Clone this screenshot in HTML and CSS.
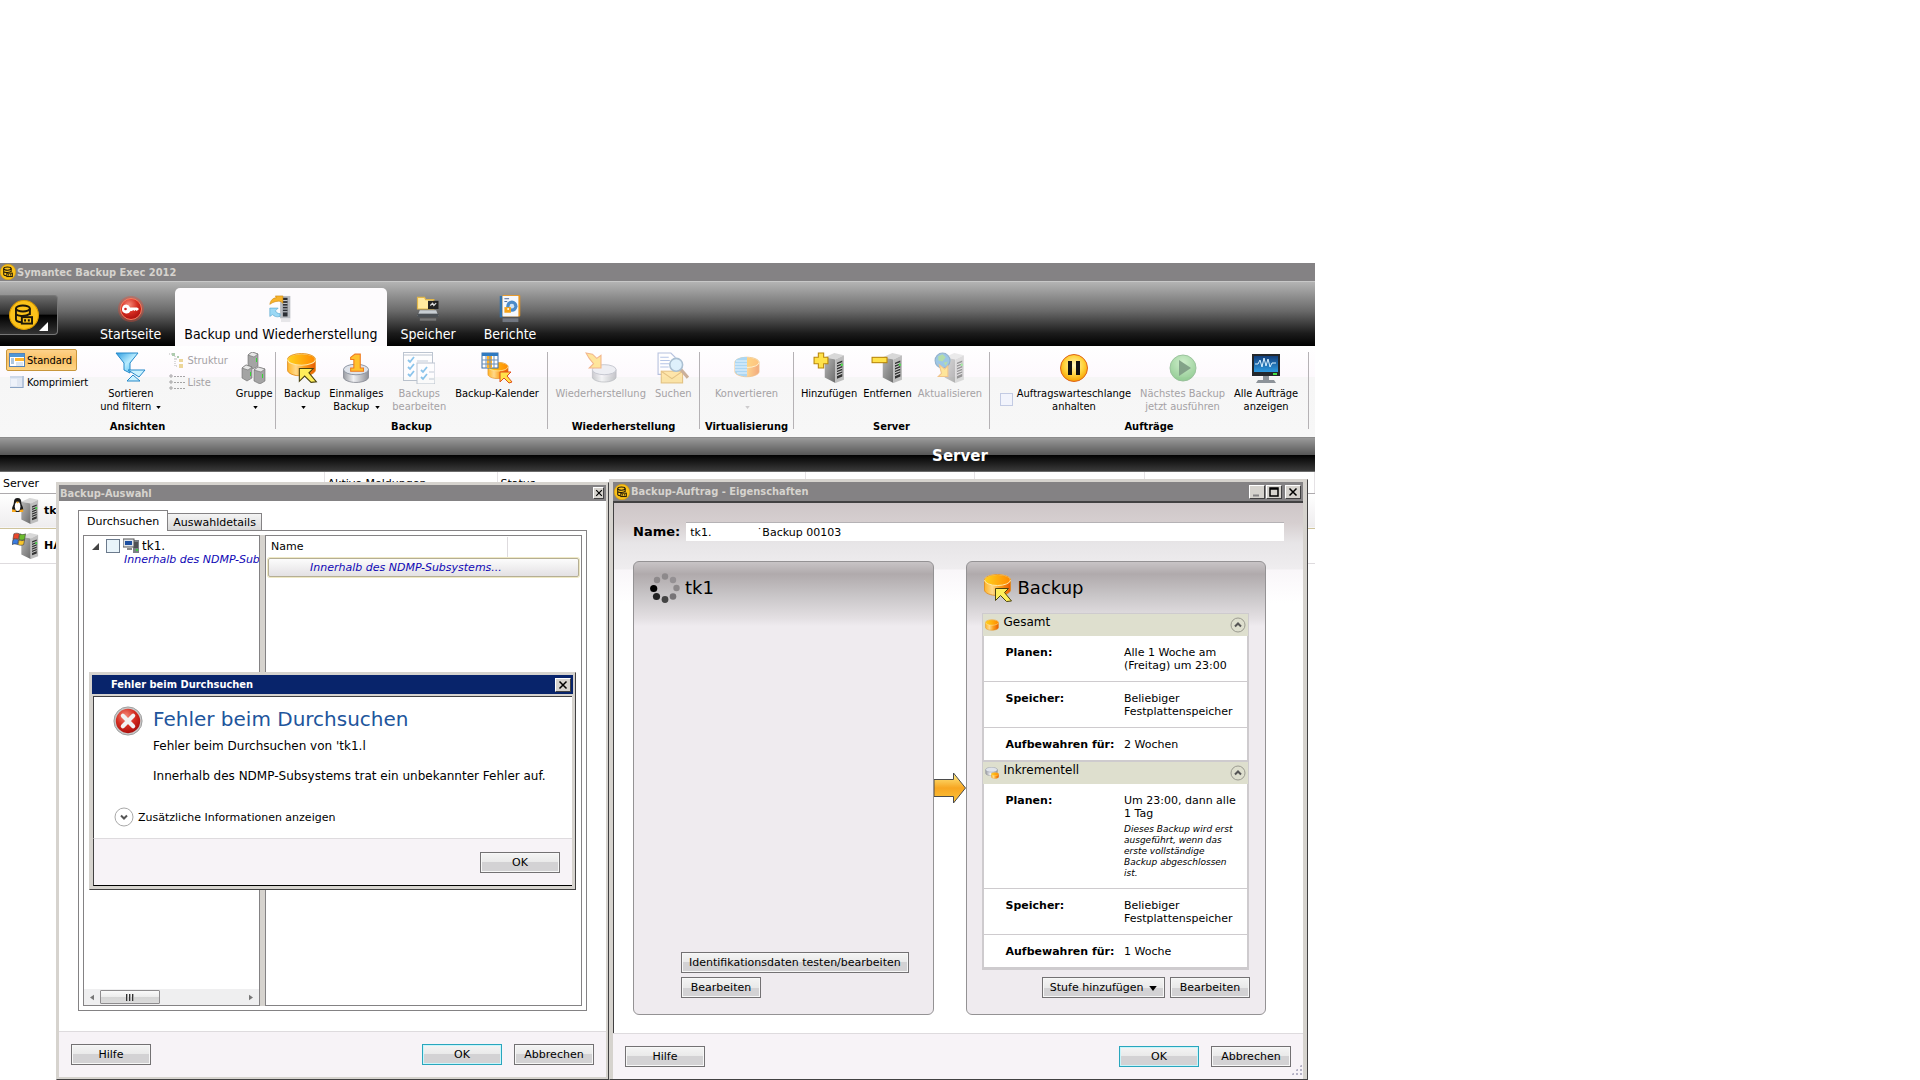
FILE: index.html
```html
<!DOCTYPE html>
<html lang="de">
<head>
    <meta charset="UTF-8">
    <meta name="viewport" content="width=device-width, initial-scale=1.0">
    <title>Symantec Backup Exec 2012</title>
    <link rel="stylesheet" href="styles.css">
</head>
<body>

    <!-- Icon definitions -->
    <svg class="defs" width="0" height="0" aria-hidden="true">
        <defs>
            <linearGradient id="gold" x1="0" y1="0" x2="1" y2="0">
                <stop offset="0" stop-color="#ffb52a"/>
                <stop offset="0.3" stop-color="#ffd98a"/>
                <stop offset="0.6" stop-color="#fba01c"/>
                <stop offset="1" stop-color="#ea5a00"/>
            </linearGradient>
            <linearGradient id="goldTop" x1="0" y1="0" x2="1" y2="0">
                <stop offset="0" stop-color="#ffd21e"/>
                <stop offset="1" stop-color="#ff8a00"/>
            </linearGradient>
            <linearGradient id="goldV" x1="0" y1="0" x2="0" y2="1">
                <stop offset="0" stop-color="#fff08a"/>
                <stop offset="0.5" stop-color="#f7a622"/>
                <stop offset="1" stop-color="#fbc63c"/>
            </linearGradient>
            <linearGradient id="metal" x1="0" y1="0" x2="1" y2="0">
                <stop offset="0" stop-color="#9a9ca2"/>
                <stop offset="0.4" stop-color="#f0f1f4"/>
                <stop offset="1" stop-color="#8e9097"/>
            </linearGradient>
            <linearGradient id="side" x1="0" y1="0" x2="1" y2="1">
                <stop offset="0" stop-color="#b5b5b5"/>
                <stop offset="1" stop-color="#6c6c6c"/>
            </linearGradient>
            <linearGradient id="blue" x1="0" y1="0" x2="1" y2="1">
                <stop offset="0" stop-color="#2a9be0"/>
                <stop offset="0.5" stop-color="#b8ecff"/>
                <stop offset="1" stop-color="#36b4ee"/>
            </linearGradient>
            <linearGradient id="screen" x1="0" y1="0" x2="0" y2="1">
                <stop offset="0" stop-color="#123f7c"/>
                <stop offset="1" stop-color="#2e9ae0"/>
            </linearGradient>
            <radialGradient id="red" cx="0.4" cy="0.3" r="0.8">
                <stop offset="0" stop-color="#f58a7a"/>
                <stop offset="0.5" stop-color="#d42c20"/>
                <stop offset="1" stop-color="#a00808"/>
            </radialGradient>
            <radialGradient id="amber" cx="0.5" cy="0.4" r="0.6">
                <stop offset="0" stop-color="#fff6c0"/>
                <stop offset="0.6" stop-color="#ffd23a"/>
                <stop offset="1" stop-color="#f5a000"/>
            </radialGradient>
            <radialGradient id="green" cx="0.5" cy="0.3" r="0.8">
                <stop offset="0" stop-color="#a0e09a"/>
                <stop offset="1" stop-color="#1f9a22"/>
            </radialGradient>
        </defs>

        <symbol id="i-exec" viewBox="0 0 28 28">
            <circle cx="14" cy="14" r="13.500" fill="#fbc21a" stroke="#d99a00"/>
            <g fill="none" stroke="#1c1608" stroke-width="1.800">
                <ellipse cx="13" cy="8" rx="6.500" ry="2.800"/>
                <path d="M6.500 8v10c0 1.500 2 2.500 5 2.800M19.500 8v6M6.500 13c1 2 8 3 13 0"/>
                <rect x="12" y="16" width="9.500" height="6"/>
                <path d="M15 18v2M18.500 18v2"/>
            </g>
        </symbol>

        <symbol id="i-key" viewBox="0 0 28 28">
            <circle cx="14" cy="14" r="13" fill="#f2452e" opacity="0.35"/>
            <circle cx="14" cy="14" r="10.500" fill="url(#red)" stroke="#ff7a5c"/>
            <path d="M9.500 9.500a4.500 4.500 0 1 0 4 6.500h1.500l1.200-1 1.200 1 1.200-1 1.200 1 2.200-2-1.900-1.500h-7A4.500 4.500 0 0 0 9.500 9.500z" fill="#fff"/>
            <circle cx="8.500" cy="14" r="1.300" fill="#c22"/>
        </symbol>

        <symbol id="i-server" viewBox="0 0 20 28">
            <path d="M1 4l9-4 9 2-8 4z" fill="#d8d8d8"/>
            <path d="M1 4l10 2v22L1 23z" fill="url(#side)"/>
            <path d="M11 6l8-4v23l-8 3z" fill="#bdbdbd"/>
            <path d="M12.500 9l5-2v15l-5 2z" fill="#333"/>
            <path d="M12.500 11l5-2M12.500 13.500l5-2M12.500 16l5-2M12.500 18.500l5-2M12.500 21l5-2" stroke="#d0d0d0"/>
            <rect x="16" y="10" width="2" height="2" fill="#4be04b"/>
        </symbol>

        <symbol id="i-transfer" viewBox="0 0 26 30">
            <rect x="12" y="1" width="11" height="24" fill="#b9bcc2"/>
            <rect x="15" y="3" width="5" height="20" fill="#2c2f35"/>
            <path d="M15 6h5M15 9h5M15 12h5M15 15h5M15 18h5" stroke="#dfe3ea"/>
            <rect x="13" y="25" width="10" height="4" fill="#d9d9dc" opacity="0.6"/>
            <path d="M1 10c1-5 4-7 7-7l-1-2h8v8l-2-2c-3-1-8 0-12 3z" fill="#f7b32b" stroke="#c98208" stroke-width="0.600"/>
            <path d="M12 23c-4 1-6 0-8-2l-3 2v-9h9l-3 3c1 2 3 3 5 3z" fill="#9bd8f5" stroke="#4a9cc8" stroke-width="0.600"/>
        </symbol>

        <symbol id="i-storage" viewBox="0 0 20 24">
            <path d="M1 2h6l1 2h7v8H1z" fill="#ffe9a0" stroke="#e2b74a"/>
            <rect x="10" y="5" width="9" height="7" fill="#222"/>
            <path d="M12 9l2-2 1 2 2-2" stroke="#ddd" fill="none"/>
            <path d="M3 13h14l2 5H1z" fill="#c8ced3"/>
            <rect x="1" y="16" width="18" height="3" fill="#4b5055"/>
            <path d="M3 21h14" stroke="#777" stroke-width="2"/>
        </symbol>

        <symbol id="i-report" viewBox="0 0 24 30">
            <rect x="1" y="1" width="3" height="23" fill="#3273ac"/>
            <rect x="4" y="0" width="19" height="23" rx="1" fill="#e59422"/>
            <rect x="4" y="1" width="17" height="22" fill="#f5f8fd"/>
            <path d="M6 4h5M6 7h3" stroke="#445f93"/>
            <circle cx="14" cy="12" r="6" fill="#4b8ac8"/>
            <circle cx="14" cy="12" r="2.500" fill="#cfe3f5"/>
            <path d="M6 13h7v6H6z" fill="#f6a317"/>
            <circle cx="10" cy="15" r="1" fill="#fff"/>
            <path d="M4 25h17v4H4z" fill="#8f98a8" opacity="0.6"/>
        </symbol>

        <symbol id="i-standard" viewBox="0 0 16 14">
            <rect x="0.500" y="0.500" width="15" height="13" fill="#fff" stroke="#5483b8"/>
            <rect x="1" y="1" width="14" height="3" fill="#4f96d4"/>
            <path d="M2 6h3M2 8h3M2 10h3" stroke="#5b8dc0"/>
            <rect x="6" y="5" width="9" height="3" fill="#ffb62e"/>
            <path d="M7 10h7M7 12h7" stroke="#b9cde2"/>
        </symbol>

        <symbol id="i-compact" viewBox="0 0 16 14">
            <rect x="1" y="1" width="14" height="12" fill="#dfe6f2"/>
            <path d="M1 2h12" stroke="#b9c8de"/>
            <path d="M14 1v12M1 12.500h13" stroke="#8aa3c4"/>
            <path d="M2 4h6v7H2z" fill="#eef2fa"/>
        </symbol>

        <symbol id="i-filter" viewBox="0 0 32 32">
            <path d="M1 1h22l-8 10v10l-6-3v-7z" fill="url(#blue)" stroke="#2689c9"/>
            <path d="M13 18h17l-6 7z" fill="#c9f2ff" stroke="#2689c9"/>
            <path d="M12 29l6-6 7 6z" fill="#c9f2ff" stroke="#2689c9"/>
        </symbol>

        <symbol id="i-tree" viewBox="0 0 16 16">
            <path d="M3 1h3v3H3zM8 4h2v2H8z" fill="#5f9a5f"/>
            <path d="M0 2h3M6 4v3h2M6 7v7h3" fill="none" stroke="#777" stroke-dasharray="1 1"/>
            <path d="M10 7h4v3h-4zM10 12h4v4h-4z" fill="#dcb338"/>
        </symbol>

        <symbol id="i-list" viewBox="0 0 16 16">
            <path d="M1 1h2v2H1zM1 7h2v2H1zM1 13h2v2H1z" fill="none" stroke="#555"/>
            <path d="M5 2.500h11M5 8.500h11M5 14.500h11" stroke="#555" stroke-dasharray="2 1"/>
        </symbol>

        <symbol id="i-group" viewBox="0 0 26 32">
            <g stroke="#6f6f6f" stroke-width="0.600">
                <path d="M7 3l4-3 6 2v12l-5 3-5-3z" fill="#a4a4a4"/><path d="M7 3l4-3 6 2-4 3z" fill="#e6e6e6"/>
                <path d="M1 16l4-3 6 2v11l-5 3-5-3z" fill="#a4a4a4"/><path d="M1 16l4-3 6 2-4 3z" fill="#e6e6e6"/>
                <path d="M13 18l4-3 7 2v12l-5 3-6-3z" fill="#a4a4a4"/><path d="M13 18l4-3 7 2-4 3z" fill="#e6e6e6"/>
            </g>
            <path d="M15 6h1v4h-1zM9 20h1v4H9zM21 22h1v4h-1z" fill="#36d636"/>
        </symbol>

        <symbol id="i-disk" viewBox="0 0 28 22">
            <path d="M1 6v10c0 3 6 5.500 13 5.500S27 19 27 16V6z" fill="url(#gold)" stroke="#e08a1a" stroke-width="0.800"/>
            <ellipse cx="14" cy="6" rx="13" ry="5.500" fill="url(#goldTop)" stroke="#ffe9a8"/>
            <path d="M1 6c0-3 6-5.500 13-5.500S27 3 27 6" fill="none" stroke="#e08a1a" stroke-width="0.800"/>
        </symbol>

        <symbol id="i-drum" viewBox="0 0 28 20">
            <path d="M1 6v8c0 3 6 5.500 13 5.500S27 17 27 14V6z" fill="url(#metal)" stroke="#7d828c" stroke-width="0.800"/>
            <ellipse cx="14" cy="6" rx="13" ry="5.500" fill="#dfe3ea" stroke="#8b92a0"/>
        </symbol>

        <symbol id="i-backup" viewBox="0 0 30 30">
            <use href="#i-disk" x="0" y="1" width="29" height="22"/>
            <path d="M12.500 15.500h13l-4 4 7 8.500-5 .5-6-6-5 5z" fill="#ffee5a" stroke="#4a4210"/>
        </symbol>

        <symbol id="i-once" viewBox="0 0 30 30">
            <use href="#i-drum" x="2" y="11" width="26" height="18"/>
            <path d="M10 5l4-3h5v13h3v3H10v-3h3V7h-3z" fill="#ffc22e" stroke="#ef7a1c"/>
        </symbol>

        <symbol id="i-checks" viewBox="0 0 32 32">
            <rect x="0.500" y="0.500" width="29" height="28" fill="#fff" stroke="#7d8ea4"/>
            <path d="M1 3h29" stroke="#7d8ea4"/>
            <rect x="14" y="11" width="18" height="21" fill="#fff" stroke="#7d8ea4"/>
            <path d="M5 8l2 2 4-5M5 15l2 2 4-5M5 22l2 2 4-5M18 18l2 2 4-5M18 25l2 2 4-5" fill="none" stroke="#1b8fdb" stroke-width="1.800"/>
            <path d="M14 9h11M26 20h5M26 27h5" stroke="#8a9cb3"/>
        </symbol>

        <symbol id="i-calendar" viewBox="0 0 32 32">
            <use href="#i-disk" x="6" y="10" width="22" height="17"/>
            <rect x="1" y="1" width="16" height="15" fill="#fff" stroke="#3a6ea8"/>
            <rect x="1" y="1" width="16" height="3" fill="#2f7ac0"/>
            <rect x="6" y="4" width="5" height="12" fill="#ffb12a"/>
            <path d="M1 8h16M1 12h16M5 4v12M9 4v12M13 4v12" stroke="#6b8fb8"/>
            <path d="M19 20h11l-4 4 5 6-3 1-5-5-4 4z" fill="#ffe14a" stroke="#e0501c"/>
        </symbol>

        <symbol id="i-restore" viewBox="0 0 30 30">
            <use href="#i-drum" x="6" y="11" width="24" height="18"/>
            <path d="M1 1l6 1 4 4 4-3v12H4l4-4-4-5z" fill="#ffcf3a" stroke="#e8721c"/>
        </symbol>

        <symbol id="i-search" viewBox="0 0 30 30">
            <path d="M1 1h12l4 4v16H1z" fill="#fff" stroke="#7088c0"/>
            <path d="M3 5h8M3 8h9M3 11h9M3 14h8" stroke="#6f8fd0"/>
            <rect x="4" y="18" width="20" height="11" fill="#ffd25a" stroke="#cf8d10"/>
            <path d="M4 18l10 7 10-7" fill="none" stroke="#cf8d10"/>
            <path d="M22 16l7 8" stroke="#9a6a3a" stroke-width="3"/>
            <circle cx="18" cy="12" r="6" fill="#bfe6fb" stroke="#5b86a8" stroke-width="1.500"/>
        </symbol>

        <symbol id="i-convert" viewBox="0 0 32 26">
            <use href="#i-disk" x="3" y="1" width="26" height="22"/>
            <path d="M16 2C9 2 4 4 4 7v9c0 3 5 5.500 12 5.500z" fill="#5cb4ea"/>
            <path d="M5 6h11M4 9h12M4 12h12M4 15h12M6 18h10" stroke="#d8f1ff"/>
        </symbol>

        <symbol id="i-add" viewBox="0 0 30 30">
            <use href="#i-server" x="10" y="1" width="20" height="28"/>
            <path d="M5 1h5v4h4v6h-4v4H5v-4H1V5h4z" fill="#ffe24a" stroke="#b98608"/>
        </symbol>

        <symbol id="i-remove" viewBox="0 0 30 30">
            <use href="#i-server" x="10" y="1" width="20" height="28"/>
            <rect x="1" y="5" width="14" height="5" fill="#ffe24a" stroke="#b98608"/>
        </symbol>

        <symbol id="i-refresh" viewBox="0 0 30 30">
            <use href="#i-server" x="9" y="1" width="20" height="28"/>
            <circle cx="8" cy="8" r="7" fill="#3f93cf" stroke="#2a6a9a"/>
            <path d="M4 4l4-2 3 3-3 4-4-1zM9 10l4-1-2 4z" fill="#6cbf5a"/>
            <path d="M5 12l5 4 3-3v10H4l3-3z" fill="#ffd23a" stroke="#e8921c"/>
        </symbol>

        <symbol id="i-pause" viewBox="0 0 32 32">
            <circle cx="16" cy="15" r="13.500" fill="url(#amber)" stroke="#e0641a"/>
            <rect x="10" y="8" width="4" height="14" fill="#111"/>
            <rect x="18" y="8" width="4" height="14" fill="#111"/>
        </symbol>

        <symbol id="i-play" viewBox="0 0 32 32">
            <circle cx="16" cy="16" r="13" fill="url(#green)" stroke="#3c8c40"/>
            <path d="M12 8l12 8-12 8z" fill="#0b4d16"/>
        </symbol>

        <symbol id="i-monitor" viewBox="0 0 32 32">
            <rect x="2" y="2" width="28" height="22" fill="#24282c"/>
            <rect x="4" y="4" width="24" height="16" fill="url(#screen)"/>
            <path d="M5 12h3l2-4 2 7 2-9 2 8 2-7 2 8 2-4h4" fill="none" stroke="#d9f1ff"/>
            <rect x="23" y="21" width="4" height="2" fill="#44e044"/>
            <path d="M13 24h6v4h5l2 3H6l2-3h5z" fill="#8d9399"/>
        </symbol>

        <symbol id="i-linux" viewBox="0 0 30 30">
            <use href="#i-server" x="9" y="1" width="20" height="28"/>
            <path d="M6 1c3 0 4 2 4 5s2 4 2 7-3 3-6 3-6 0-6-3 2-4 2-7 1-5 4-5z" fill="#1a1a1a"/>
            <ellipse cx="6" cy="10" rx="3" ry="5" fill="#fff"/>
            <path d="M4 5h4l-2 2z" fill="#f7a81c"/>
            <path d="M0 13l4 1v2H0zM12 13l-4 1v2h4z" fill="#f7a81c"/>
        </symbol>

        <symbol id="i-windows" viewBox="0 0 30 30">
            <use href="#i-server" x="9" y="1" width="20" height="28"/>
            <g stroke="#333" stroke-width="0.600">
                <path d="M2 2c2-1 4-1 6 0l-1 6c-2-1-4-1-6 0z" fill="#e8482c"/>
                <path d="M8.500 2c2 1 4 1 6 0l-1 6c-2 1-4 1-6 0z" fill="#6cbc2c"/>
                <path d="M1 8.500c2-1 4-1 6 0l-1 5c-2-1-4-1-6 0z" fill="#3a7ce0"/>
                <path d="M7.500 8.500c2 1 4 1 6 0l-1 5c-2 1-4 1-6 0z" fill="#f7c52c"/>
            </g>
        </symbol>

        <symbol id="i-computer" viewBox="0 0 16 16">
            <rect x="10" y="2" width="6" height="13" fill="#7c8186"/>
            <path d="M11 5h4M11 7h4M11 9h4" stroke="#222"/>
            <rect x="13" y="11" width="2" height="2" fill="#3fd03f"/>
            <rect x="0" y="1" width="11" height="8" fill="#dfe3e8" stroke="#555"/>
            <rect x="2" y="3" width="7" height="4" fill="#1d4fa0"/>
            <path d="M4 10h5v2H4z" fill="#888"/>
        </symbol>

        <symbol id="i-spinner" viewBox="0 0 30 30">
            <circle cx="15" cy="3.500" r="3.200" fill="#8d898b"/>
            <circle cx="23" cy="7" r="3.200" fill="#949093"/>
            <circle cx="26.500" cy="15" r="3.200" fill="#8d898b"/>
            <circle cx="23" cy="23.500" r="3.300" fill="#777477"/>
            <circle cx="15" cy="26.500" r="3.400" fill="#444"/>
            <circle cx="6.500" cy="23.500" r="3.600" fill="#222"/>
            <circle cx="3.700" cy="15.500" r="3.600" fill="#000"/>
            <circle cx="7" cy="7" r="3.200" fill="#8d898b"/>
        </symbol>

        <symbol id="i-arrow" viewBox="0 0 32 32">
            <path d="M0 7.500h19.500V1L31.500 16 19.500 31v-6.500H0z" fill="url(#goldV)" stroke="#4b4b4b"/>
        </symbol>

        <symbol id="i-error" viewBox="0 0 32 32">
            <circle cx="16" cy="16" r="15" fill="#c9c9c9" stroke="#9a9a9a"/>
            <circle cx="16" cy="16" r="13" fill="url(#red)"/>
            <path d="M10.500 10.500l11 11M21.500 10.500l-11 11" stroke="#f2f2f2" stroke-width="4.500" stroke-linecap="round"/>
        </symbol>

        <symbol id="i-chevron-up" viewBox="0 0 16 16">
            <circle cx="8" cy="8" r="7" fill="none" stroke="#9b9b90"/>
            <path d="M5 9.500l3-3 3 3" fill="none" stroke="#555" stroke-width="2"/>
        </symbol>

        <symbol id="i-chevron-down" viewBox="0 0 20 20">
            <circle cx="10" cy="10" r="9" fill="#fff" stroke="#a9a9a9"/>
            <path d="M7 8.500l3 3 3-3" fill="none" stroke="#555" stroke-width="2"/>
        </symbol>

        <symbol id="i-increment" viewBox="0 0 14 12">
            <use href="#i-drum" x="0" y="0" width="13" height="9"/>
            <use href="#i-disk" x="6" y="5" width="8" height="7"/>
        </symbol>

        <symbol id="i-caret" viewBox="0 0 6 4"><path d="M0 0h6L3 4z" fill="currentColor"/></symbol>
        <symbol id="i-min" viewBox="0 0 10 10"><path d="M1 8.500h6" stroke="#848284" stroke-width="2"/></symbol>
        <symbol id="i-max" viewBox="0 0 10 10"><path d="M1 1h8v8H1zM1 2h8" fill="none" stroke="#000" stroke-width="1.500"/></symbol>
        <symbol id="i-close" viewBox="0 0 10 10"><path d="M1.500 1.500l7 7M8.500 1.500l-7 7" stroke="#000" stroke-width="1.500"/></symbol>
    </svg>

    <div class="app">
        <header class="titlebar">
            <svg class="icon-16"><use href="#i-exec"/></svg>
            <h1>Symantec Backup Exec 2012</h1>
        </header>

        <nav class="tabs">
            <button class="orb" type="button" aria-label="Backup Exec">
                <svg class="orb-icon"><use href="#i-exec"/></svg>
                <svg class="orb-corner" viewBox="0 0 8 8"><path d="M8 0v8H0z" fill="#fff"/></svg>
            </button>
            <a class="tab" href="#start"><svg class="icon-28"><use href="#i-key"/></svg>Startseite</a>
            <a class="tab active" href="#backup"><svg class="icon-28"><use href="#i-transfer"/></svg>Backup und Wiederherstellung</a>
            <a class="tab" href="#storage"><svg class="icon-28"><use href="#i-storage"/></svg>Speicher</a>
            <a class="tab" href="#reports"><svg class="icon-28"><use href="#i-report"/></svg>Berichte</a>
        </nav>

        <div class="ribbon">
            <section class="group">
                <div class="tools views">
                    <div class="stack">
                        <button class="small selected" type="button"><svg class="icon-16"><use href="#i-standard"/></svg>Standard</button>
                        <button class="small" type="button"><svg class="icon-16"><use href="#i-compact"/></svg>Komprimiert</button>
                    </div>
                    <button class="tool" type="button"><svg class="icon-32"><use href="#i-filter"/></svg><span>Sortieren<br>und filtern <svg class="caret"><use href="#i-caret"/></svg></span></button>
                    <div class="stack">
                        <button class="small" type="button" disabled><svg class="icon-16"><use href="#i-tree"/></svg>Struktur</button>
                        <button class="small" type="button" disabled><svg class="icon-16"><use href="#i-list"/></svg>Liste</button>
                    </div>
                    <button class="tool" type="button"><svg class="icon-32"><use href="#i-group"/></svg><span>Gruppe<br><svg class="caret"><use href="#i-caret"/></svg></span></button>
                </div>
                <h2>Ansichten</h2>
            </section>

            <section class="group">
                <div class="tools">
                    <button class="tool" type="button"><svg class="icon-32"><use href="#i-backup"/></svg><span>Backup<br><svg class="caret"><use href="#i-caret"/></svg></span></button>
                    <button class="tool" type="button"><svg class="icon-32"><use href="#i-once"/></svg><span>Einmaliges<br>Backup <svg class="caret"><use href="#i-caret"/></svg></span></button>
                    <button class="tool" type="button" disabled><svg class="icon-32"><use href="#i-checks"/></svg><span>Backups<br>bearbeiten</span></button>
                    <button class="tool" type="button"><svg class="icon-32"><use href="#i-calendar"/></svg><span>Backup-Kalender</span></button>
                </div>
                <h2>Backup</h2>
            </section>

            <section class="group">
                <div class="tools">
                    <button class="tool" type="button" disabled><svg class="icon-32"><use href="#i-restore"/></svg><span>Wiederherstellung</span></button>
                    <button class="tool" type="button" disabled><svg class="icon-32"><use href="#i-search"/></svg><span>Suchen</span></button>
                </div>
                <h2>Wiederherstellung</h2>
            </section>

            <section class="group">
                <div class="tools">
                    <button class="tool" type="button" disabled><svg class="icon-32"><use href="#i-convert"/></svg><span>Konvertieren<br><svg class="caret"><use href="#i-caret"/></svg></span></button>
                </div>
                <h2>Virtualisierung</h2>
            </section>

            <section class="group">
                <div class="tools tight">
                    <button class="tool" type="button"><svg class="icon-32"><use href="#i-add"/></svg><span>Hinzufügen</span></button>
                    <button class="tool" type="button"><svg class="icon-32"><use href="#i-remove"/></svg><span>Entfernen</span></button>
                    <button class="tool" type="button" disabled><svg class="icon-32"><use href="#i-refresh"/></svg><span>Aktualisieren</span></button>
                </div>
                <h2>Server</h2>
            </section>

            <section class="group">
                <div class="tools">
                    <div class="queue">
                        <svg class="icon-32"><use href="#i-pause"/></svg>
                        <input type="checkbox" id="holdQueue">
                        <label for="holdQueue">Auftragswarteschlange<br>anhalten</label>
                    </div>
                    <button class="tool" type="button" disabled><svg class="icon-32"><use href="#i-play"/></svg><span>Nächstes Backup<br>jetzt ausführen</span></button>
                    <button class="tool" type="button"><svg class="icon-32"><use href="#i-monitor"/></svg><span>Alle Aufträge<br>anzeigen</span></button>
                </div>
                <h2>Aufträge</h2>
            </section>
        </div>

        <div class="section-bar"><h2>Server</h2></div>

        <table class="servers">
            <thead>
                <tr><th class="col-server">Server</th><th class="col-alerts">Aktive Meldungen</th><th class="col-status">Status</th><th></th><th></th><th></th></tr>
            </thead>
            <tbody>
                <tr class="current"><td colspan="6"><span class="server-name"><svg class="icon-28"><use href="#i-linux"/></svg>tk1</span></td></tr>
                <tr><td colspan="6"><span class="server-name"><svg class="icon-28"><use href="#i-windows"/></svg>HA</span></td></tr>
            </tbody>
        </table>
    </div>

    <!-- Backup-Auswahl -->
    <section class="window selection">
        <header class="caption">
            <h2>Backup-Auswahl</h2>
            <button class="box small-box" type="button" aria-label="Schließen"><svg><use href="#i-close"/></svg></button>
        </header>
        <div class="selection-body">
            <div class="page-tabs">
                <button class="page-tab open" type="button">Durchsuchen</button>
                <button class="page-tab" type="button">Auswahldetails</button>
            </div>
            <div class="browser">
                <div class="tree">
                    <div class="node">
                        <svg class="twisty" viewBox="0 0 7 7"><path d="M7 0v7H0z" fill="#444"/></svg>
                        <input type="checkbox" id="nodeTk1">
                        <svg class="icon-16"><use href="#i-computer"/></svg>
                        <label for="nodeTk1">tk1.</label>
                    </div>
                    <p class="pending">Innerhalb des NDMP-Subsystems...</p>
                    <div class="scrollbar">
                        <svg viewBox="0 0 5 7"><path d="M5 0v7L0 3.500z" fill="#777"/></svg>
                        <div class="thumb"><i></i><i></i><i></i></div>
                        <svg class="next" viewBox="0 0 5 7"><path d="M0 0v7l5-3.500z" fill="#777"/></svg>
                    </div>
                </div>
                <div class="listing">
                    <div class="listing-head"><span>Name</span></div>
                    <div class="listing-row">Innerhalb des NDMP-Subsystems...</div>
                </div>
            </div>
        </div>
        <footer class="actions">
            <button class="btn" type="button">Hilfe</button>
            <button class="btn default push" type="button">OK</button>
            <button class="btn" type="button">Abbrechen</button>
        </footer>
    </section>

    <!-- Backup-Auftrag -->
    <section class="window job">
        <header class="caption">
            <svg class="icon-16"><use href="#i-exec"/></svg>
            <h2>Backup-Auftrag - Eigenschaften</h2>
            <button class="box" type="button" aria-label="Minimieren"><svg><use href="#i-min"/></svg></button>
            <button class="box" type="button" aria-label="Maximieren"><svg><use href="#i-max"/></svg></button>
            <button class="box last" type="button" aria-label="Schließen"><svg><use href="#i-close"/></svg></button>
        </header>
        <div class="job-body">
            <div class="name-row">
                <label for="jobName">Name:</label>
                <input type="text" id="jobName" value="tk1.&nbsp;&nbsp;&nbsp;&nbsp;&nbsp;&nbsp;&nbsp;&nbsp;&nbsp;&nbsp;&nbsp;&nbsp;&nbsp;˙Backup 00103">
            </div>
            <div class="cards">
                <article class="card">
                    <h3><svg class="icon-30"><use href="#i-spinner"/></svg>tk1</h3>
                    <div class="card-actions left">
                        <button class="btn" type="button">Identifikationsdaten testen/bearbeiten</button>
                        <button class="btn" type="button">Bearbeiten</button>
                    </div>
                </article>
                <svg class="flow-arrow"><use href="#i-arrow"/></svg>
                <article class="card">
                    <h3><svg class="icon-30"><use href="#i-backup"/></svg>Backup</h3>
                    <div class="stages">
                        <div class="stage-head">
                            <svg class="icon-14"><use href="#i-disk"/></svg>
                            <h4>Gesamt</h4>
                            <button class="fold" type="button" aria-label="Gesamt zuklappen"><svg><use href="#i-chevron-up"/></svg></button>
                        </div>
                        <table class="stage">
                            <tr><th>Planen:</th><td>Alle 1 Woche am (Freitag) um 23:00</td></tr>
                            <tr><th>Speicher:</th><td>Beliebiger Festplattenspeicher</td></tr>
                            <tr><th>Aufbewahren für:</th><td>2 Wochen</td></tr>
                        </table>
                        <div class="stage-head">
                            <svg class="icon-14"><use href="#i-increment"/></svg>
                            <h4>Inkrementell</h4>
                            <button class="fold" type="button" aria-label="Inkrementell zuklappen"><svg><use href="#i-chevron-up"/></svg></button>
                        </div>
                        <table class="stage">
                            <tr><th>Planen:</th><td>Um 23:00, dann alle 1 Tag<p>Dieses Backup wird erst ausgeführt, wenn das erste vollständige Backup abgeschlossen ist.</p></td></tr>
                            <tr><th>Speicher:</th><td>Beliebiger Festplattenspeicher</td></tr>
                            <tr><th>Aufbewahren für:</th><td>1 Woche</td></tr>
                        </table>
                    </div>
                    <div class="card-actions right">
                        <button class="btn" type="button">Stufe hinzufügen <svg class="caret"><use href="#i-caret"/></svg></button>
                        <button class="btn" type="button">Bearbeiten</button>
                    </div>
                </article>
            </div>
        </div>
        <footer class="actions">
            <button class="btn" type="button">Hilfe</button>
            <button class="btn default push" type="button">OK</button>
            <button class="btn" type="button">Abbrechen</button>
            <span class="grip"></span>
        </footer>
    </section>

    <!-- Fehlermeldung -->
    <section class="window error" role="alertdialog" aria-labelledby="errorCaption">
        <header class="caption">
            <h2 id="errorCaption">Fehler beim Durchsuchen</h2>
            <button class="box" type="button" aria-label="Schließen"><svg><use href="#i-close"/></svg></button>
        </header>
        <div class="error-body">
            <svg class="icon-30"><use href="#i-error"/></svg>
            <div class="message">
                <h3>Fehler beim Durchsuchen</h3>
                <p>Fehler beim Durchsuchen von 'tk1.l</p>
                <p>Innerhalb des NDMP-Subsystems trat ein unbekannter Fehler auf.</p>
            </div>
            <button class="more" type="button"><svg><use href="#i-chevron-down"/></svg>Zusätzliche Informationen anzeigen</button>
        </div>
        <footer class="actions">
            <button class="btn push" type="button">OK</button>
        </footer>
    </section>

</body>
</html>
```

FILE: styles.css
```css
* {
    box-sizing: border-box;
}

body {
    font-family: "DejaVu Sans", Verdana, sans-serif;
    font-size: 11px;
    line-height: 13px;
    margin: 0;
    height: 100vh;
    overflow: hidden;
    position: relative;
    background-color: #fff;
    color: #000;
}

h1, h2, h3, h4, p {
    margin: 0;
}

button, input {
    font: inherit;
    color: inherit;
}

button {
    padding: 0;
    border: 0;
    background: none;
}

svg {
    display: block;
    flex-shrink: 0;
}

.defs {
    position: absolute;
}

.icon-14 { width: 14px; height: 12px; }
.icon-16 { width: 16px; height: 16px; }
.icon-28 { width: 28px; height: 28px; }
.icon-30 { width: 30px; height: 30px; }
.icon-32 { width: 32px; height: 32px; }

/* Main window */
.app {
    margin: 263px 605px 0 0;
    height: calc(100vh - 263px);
    overflow: hidden;
}

.titlebar {
    display: flex;
    align-items: center;
    gap: 1px;
    height: 18px;
    background-color: #848284;
    color: #d6d3ce;
}

.titlebar h1 {
    font-family: "DejaVu Sans Condensed", Tahoma, sans-serif;
    font-size: 11px;
}

.tabs {
    display: flex;
    align-items: flex-start;
    height: 65px;
    padding-top: 6px;
    font-family: "DejaVu Sans Condensed", Tahoma, sans-serif;
    font-size: 14px;
    border-top: 1px solid #c8c8c8;
    background: linear-gradient(#b4b4b4 0%, #6a6a6a 45%, #1c1c1c 80%, #000 100%);
}

.orb {
    display: flex;
    align-items: flex-end;
    width: 58px;
    height: 40px;
    margin: 7px 28px 0 0;
    padding: 0 8px 3px 9px;
    border: 1px solid #777;
    border-left: 0;
    border-radius: 0 4px 4px 0;
    background: linear-gradient(#6c6c6c, #2b2b2b 48%, #000 50%, #333);
}

.orb-icon {
    width: 30px;
    height: 32px;
}

.orb-corner {
    width: 9px;
    height: 9px;
}

.tab {
    display: flex;
    flex-direction: column;
    align-items: center;
    height: 58px;
    padding: 7px 14px 0;
    gap: 3px;
    line-height: 16px;
    color: #fff;
    text-decoration: none;
}

.tab.active {
    padding: 7px 9px 0;
    border-radius: 5px 5px 0 0;
    background-color: #fdfbfd;
    color: #000;
}

/* Ribbon */
.ribbon {
    display: grid;
    grid-template-columns: 276fr 272fr 152fr 94fr 196fr 319fr 6fr;
    padding: 6px 0 8px;
    font-family: "DejaVu Sans Condensed", Tahoma, sans-serif;
    background: linear-gradient(#fff, #fdf9fd 34%, #f6f6f6 34%, #f7f7f7);
}

.group {
    display: flex;
    flex-direction: column;
    justify-content: space-between;
    min-width: 0;
    height: 77px;
    border-right: 1px solid #b5b2b5;
}

.group h2 {
    margin-bottom: -5px;
    font-size: 11px;
    line-height: 14px;
    text-align: center;
}

.tools {
    display: flex;
    justify-content: center;
    gap: 9px;
}

.tools.tight {
    gap: 6px;
}

.tools.views {
    justify-content: flex-start;
    gap: 7px;
    padding-left: 6px;
}

.tool {
    display: flex;
    flex-direction: column;
    align-items: center;
    gap: 3px;
    white-space: nowrap;
}

.caret {
    display: inline-block;
    width: 5px;
    height: 3px;
    margin-left: 2px;
    vertical-align: middle;
}

.stack {
    display: flex;
    flex-direction: column;
    align-items: flex-start;
    margin-top: -3px;
}

.small {
    display: flex;
    align-items: center;
    gap: 2px;
    height: 22px;
    padding: 0 4px 0 2px;
    border: 1px solid transparent;
}

.small.selected {
    border-color: #c8963c;
    border-radius: 2px;
    background: linear-gradient(#fdd28a, #fbc164 50%, #fdd587);
}

button:disabled {
    color: #a5a2a5;
}

button:disabled svg {
    opacity: 0.5;
}

.stack button:disabled {
    padding: 0;
}

.queue {
    display: grid;
    grid-template-columns: 13px auto;
    align-items: center;
    justify-items: center;
    column-gap: 4px;
    row-gap: 1px;
    text-align: center;
}

.queue svg {
    grid-column: 2;
}

input[type="checkbox"] {
    appearance: none;
    width: 13px;
    height: 13px;
    margin: 0;
    border: 1px solid #c3cbe3;
    background-color: #f2f4fc;
}

.section-bar {
    height: 35px;
    padding-left: 46%;
    border-top: 1px solid #8c8c8c;
    border-bottom: 1px solid #6b6b6b;
    background: linear-gradient(#9a9a9a, #585858 50%, #000 51%, #3a3a3a);
    color: #fff;
    text-align: center;
}

.section-bar h2 {
    font-size: 15px;
    line-height: 36px;
}

.servers {
    width: 100%;
    table-layout: fixed;
    border-collapse: collapse;
}

.servers th {
    height: 21px;
    padding: 2px 3px 0;
    border-right: 1px solid #e5e2e5;
    border-bottom: 1px solid #adaaad;
    font-weight: normal;
    text-align: left;
}

.servers td {
    height: 35px;
    padding: 0 0 0 12px;
    border-bottom: 1px solid #dedbde;
    font-weight: bold;
}

.servers .current td {
    border-bottom-color: #cec39c;
    background: linear-gradient(#fff, #eeecee);
}

.col-server { width: 324px; }
.col-alerts { width: 173px; }
.col-status { width: 308px; }

.server-name {
    display: flex;
    align-items: center;
    gap: 4px;
}

/* Floating windows */
.window {
    position: absolute;
    display: flex;
    flex-direction: column;
    padding: 2px;
    border: 1px solid #d6d3ce;
    border-right-color: #424142;
    border-bottom-color: #424142;
    background-color: #d6d3ce;
}

.caption {
    display: flex;
    align-items: center;
    height: 18px;
    padding: 0 2px 0 1px;
    background-color: #848284;
    color: #d6d3ce;
}

.caption h2 {
    flex: 1;
    font-family: "DejaVu Sans Condensed", Tahoma, sans-serif;
    font-size: 11px;
}

.box {
    display: flex;
    align-items: center;
    justify-content: center;
    width: 16px;
    height: 14px;
    border: 1px solid #fff;
    border-right-color: #424142;
    border-bottom-color: #424142;
    background-color: #d6d3ce;
}

.box.last {
    margin-left: 2px;
}

.small-box {
    width: 11px;
    height: 12px;
}

.box svg {
    width: 10px;
    height: 10px;
}

.small-box svg {
    width: 8px;
    height: 8px;
}

.actions {
    display: flex;
    align-items: center;
    gap: 12px;
    height: 46px;
    padding: 0 12px;
    border-top: 1px solid #dedbde;
    background-color: #f7f3f7;
}

.push {
    margin-left: auto;
}

.btn {
    min-width: 80px;
    height: 21px;
    padding: 0 8px;
    border: 1px solid #737173;
    background: linear-gradient(#f4f4f4, #e9e9e9 50%, #d3d2d4 50%, #d3d2d4);
    box-shadow: inset 0 0 0 1px #f7f7f7;
    white-space: nowrap;
}

.btn.default {
    border-color: #29a6bd;
    box-shadow: inset 0 0 0 1px #c9f5fb;
}

/* Backup-Auswahl */
.selection {
    left: 56px;
    top: 482px;
    bottom: 0;
    width: 553px;
}

.selection .caption {
    height: 16px;
}

.selection-body {
    flex: 1;
    display: flex;
    flex-direction: column;
    padding: 9px 19px 20px;
    background-color: #fff;
}

.page-tabs {
    display: flex;
    align-items: flex-end;
    height: 20px;
}

.page-tab {
    height: 17px;
    padding: 0 5px;
    border: 1px solid #848284;
    border-left: 0;
    border-bottom: 0;
    background: linear-gradient(#f4f4f4, #d8d8d8);
}

.page-tab.open {
    position: relative;
    height: 21px;
    padding: 0 8px;
    border-left: 1px solid #848284;
    margin-bottom: -1px;
    background: #fff;
}

.browser {
    flex: 1;
    display: flex;
    gap: 5px;
    padding: 4px;
    border: 1px solid #848284;
    background: #fff;
}

.tree {
    display: flex;
    flex-direction: column;
    width: 177px;
    overflow: hidden;
    border: 1px solid #848284;
    box-shadow: 5px 0 0 #d6d3ce;
}

.node {
    display: flex;
    align-items: center;
    gap: 3px;
    padding: 2px 0 0 8px;
}

.node input {
    width: 14px;
    height: 14px;
    margin-left: 4px;
    border-color: #6b7a8c;
    background-color: #e9f4fa;
}

.node label {
    font-size: 12px;
}

.twisty {
    width: 7px;
    height: 7px;
}

.pending {
    padding-left: 40px;
    font-style: italic;
    line-height: 12px;
    white-space: nowrap;
    color: #1008b5;
}

.scrollbar {
    display: flex;
    align-items: center;
    gap: 6px;
    height: 16px;
    margin-top: auto;
    padding: 0 6px 0 6px;
    background-color: #efeff0;
}

.scrollbar svg {
    width: 4px;
    height: 7px;
}

.scrollbar .next {
    margin-left: auto;
}

.thumb {
    display: flex;
    align-items: center;
    justify-content: center;
    gap: 1px;
    width: 60px;
    height: 14px;
    border: 1px solid #8e8c8e;
    border-radius: 1px;
    background: linear-gradient(#fafafa, #ececec 50%, #d5d5d5 50%, #dcdcdc);
}

.thumb i {
    width: 2px;
    height: 7px;
    border-left: 1px solid #333;
    background-color: #aaa;
}

.listing {
    flex: 1;
    padding: 1px 2px;
    border: 1px solid #848284;
}

.listing-head {
    display: flex;
    height: 21px;
    margin-right: 71px;
    padding-left: 3px;
    line-height: 20px;
    border-right: 1px solid #dedbde;
}

.listing-row {
    height: 19px;
    padding-left: 41px;
    line-height: 17px;
    border: 1px solid #b5ae94;
    border-radius: 2px;
    box-shadow: 0 0 0 1px #efe9c4;
    background: linear-gradient(#fcfcfc, #e3e1e3);
    font-style: italic;
    color: #1008b5;
}

/* Backup-Auftrag */
.job {
    left: 609px;
    top: 479px;
    bottom: 0;
    width: 699px;
    padding: 2px 4px 0 3px;
}

.job .caption {
    gap: 1px;
    height: 19px;
}

.job-body {
    flex: 1;
    display: flex;
    flex-direction: column;
    gap: 20px;
    padding: 19px 19px 18px;
    border-top: 2px solid #424142;
    border-left: 1px solid #424142;
    background: linear-gradient(#cec6c8, #d6cfd0 20px, #e7e5e7 40px, #efedef 66px, #f9f6f9 67px, #fff 100px);
}

.name-row {
    display: flex;
    align-items: center;
    gap: 6px;
    height: 19px;
}

.name-row label {
    font-size: 13px;
    font-weight: bold;
}

.name-row input {
    flex: 1;
    height: 19px;
    padding: 0 4px;
    border: 0;
    border-top: 1px solid #b5b2b5;
    background-color: #fff;
}

.cards {
    flex: 1;
    display: flex;
    align-items: stretch;
    padding-right: 18px;
}

.card {
    flex: 1;
    display: flex;
    flex-direction: column;
    padding: 11px 16px 16px;
    border: 1px solid #949294;
    border-radius: 6px;
    background: linear-gradient(#c8c4c6, #b0aaac 12px, #c9c6c8 34px, #e3dfe2 56px, #efebef 64px);
}

.card h3 {
    display: flex;
    align-items: center;
    gap: 5px;
    font-size: 18px;
    font-weight: normal;
    line-height: 30px;
}

.flow-arrow {
    width: 32px;
    height: 32px;
    align-self: center;
}

.card-actions {
    display: flex;
    margin-top: auto;
    gap: 5px;
}

.card-actions.left {
    flex-direction: column;
    align-items: flex-start;
    gap: 4px;
    padding-left: 31px;
}

.card-actions.right {
    justify-content: flex-end;
    margin-right: -1px;
}

.card-actions .btn {
    padding: 0 7px;
}

.card-actions .caret {
    width: 8px;
    height: 5px;
}

.stages {
    margin: 10px 0 0 -1px;
    border: 1px solid #cecbce;
    box-shadow: inset 0 0 0 1px #cecbce;
}

.stage-head {
    display: flex;
    align-items: center;
    gap: 5px;
    height: 22px;
    padding: 0 2px;
    background-color: #dedfce;
}

.stage-head h4 {
    flex: 1;
    padding-bottom: 5px;
    font-size: 12px;
    font-weight: normal;
}

.fold svg {
    width: 16px;
    height: 16px;
}

.stage {
    width: 100%;
    border-collapse: collapse;
    table-layout: fixed;
    background-color: #fff;
    border: 1px solid #cecbce;
    border-top: 0;
}

.stage th,
.stage td {
    padding: 10px 6px 9px 0;
    vertical-align: top;
    text-align: left;
    border-bottom: 1px solid #cecbce;
}

.stage tr:last-child th,
.stage tr:last-child td {
    border-bottom-width: 2px;
}

.stage th {
    width: 141px;
    padding-left: 22px;
    padding-right: 0;
    white-space: nowrap;
}

.stage p {
    padding: 4px 6px 0 0;
    font-size: 9px;
    line-height: 11px;
    font-style: italic;
}

.grip {
    position: absolute;
    right: 5px;
    bottom: 4px;
    width: 11px;
    height: 11px;
    background: radial-gradient(#b5b2c5 1px, transparent 1px) 0 0 / 4px 4px;
    clip-path: polygon(100% 0, 100% 100%, 0 100%);
}

/* Fehlermeldung */
.error {
    left: 89px;
    top: 672px;
    width: 487px;
}

.error .caption {
    height: 19px;
    padding-left: 19px;
    background-color: #08246b;
    color: #fff;
}

.error-body {
    display: grid;
    grid-template-columns: 30px 1fr;
    column-gap: 10px;
    margin: 2px 1px 0;
    padding: 9px 18px 11px 19px;
    border-top: 1px solid #424142;
    border-left: 1px solid #424142;
    background-color: #fff;
}

.message h3 {
    font-size: 20px;
    font-weight: normal;
    line-height: 26px;
    color: #21559c;
}

.message p {
    margin-bottom: 14px;
    font-size: 12px;
    line-height: 16px;
    white-space: nowrap;
}

.message h3 + p {
    margin-top: 6px;
}

.more {
    grid-column: 1 / -1;
    display: flex;
    align-items: center;
    gap: 4px;
    margin-top: 9px;
    padding-left: 1px;
}

.more svg {
    width: 20px;
    height: 20px;
}

.error .actions {
    height: 48px;
    margin: 0 1px 1px;
    border-left: 1px solid #424142;
    border-bottom: 1px solid #000;
}
```
